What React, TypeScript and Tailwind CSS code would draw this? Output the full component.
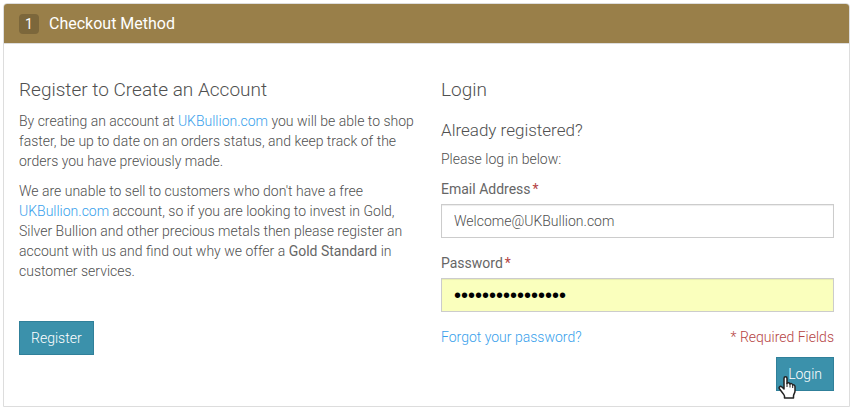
import { useState } from "react";
import type { ReactNode } from "react";

function BrandLink() {
  return (
    <a href="#home" className="text-[#389fec] hover:underline">
      UKBullion.com
    </a>
  );
}

function ActionButton({
  children,
  type = "button",
}: {
  children: ReactNode;
  type?: "button" | "submit";
}) {
  return (
    <button
      type={type}
      className="block h-[34px] px-[11px] text-sm text-white bg-[#3b91ab] border border-[#30809a] cursor-pointer"
    >
      {children}
    </button>
  );
}

function HandPointer() {
  return (
    <svg
      viewBox="0 0 18 24"
      aria-hidden="true"
      className="absolute left-0.5 top-[18px] w-[18px] h-6 pointer-events-none"
    >
      <path
        d="M6 14V3.5C6 1.2 9 1.2 9 3.5V8.5C9.5 7.4 11.6 7.6 12 9C12.7 8.2 14.4 8.5 14.7 9.9C15.7 9.4 17 10.2 17 11.6V16C17 18.2 15.5 19 15.5 21V23H6.5V21C6.5 19.5 3.5 17 1.4 13.7C0.5 12.1 2.2 10.7 3.7 11.8Z"
        fill="#fff"
        stroke="#222"
        strokeWidth="1.5"
        strokeLinejoin="round"
      />
      <path d="M9 8V12M12 9V12.5M14.7 10V13" stroke="#222" fill="none" />
    </svg>
  );
}

function Field({
  id,
  label,
  type,
  value,
  onChange,
  className,
}: {
  id: string;
  label: string;
  type: string;
  value: string;
  onChange: (value: string) => void;
  className: string;
}) {
  return (
    <div className="mb-[15px]">
      <label htmlFor={id} className="block mb-[5px] font-normal text-[#666]">
        {label}
        <span className="ml-0.5 text-[#b54343]">*</span>
      </label>
      <input
        id={id}
        type={type}
        value={value}
        onChange={(e) => onChange(e.target.value)}
        className={`block w-full h-[34px] px-3 border border-[#ccc] shadow-[inset_0_1px_1px_rgba(0,0,0,0.075)] outline-none ${className}`}
      />
    </div>
  );
}

export default function App() {
  const [email, setEmail] = useState("Welcome@UKBullion.com");
  const [password, setPassword] = useState("goldstandard2015");

  return (
    <main className="p-[3px] pb-0 bg-white font-['Roboto',sans-serif] font-light text-sm text-[#505050]">
      <section className="border border-[#ddd] rounded-t">
        <header className="flex items-center gap-2.5 h-10 px-[15px] bg-[#997f49] border-b border-[#ddd] rounded-t-[3px] text-white">
          <span className="flex items-center justify-center size-5 rounded bg-[#7c673b] font-normal">
            1
          </span>
          <h2 className="text-base font-normal">Checkout Method</h2>
        </header>

        <div className="grid grid-cols-2 gap-[29px] px-[15px] pt-[34px] pb-[15px]">
          <div>
            <h3 className="mb-[9px] text-[19px] leading-6">
              Register to Create an Account
            </h3>
            <div className="mb-10 -mr-2.5">
              <p className="mb-2.5">
                By creating an account at <BrandLink /> you will be able to shop
                faster, be up to date on an orders status, and keep track of the
                orders you have previously made.
              </p>
              <p>
                We are unable to sell to customers who don't have a free{" "}
                <BrandLink /> account, so if you are looking to invest in Gold,
                Silver Bullion and other precious metals then please register an
                account with us and find out why we offer a{" "}
                <strong className="font-normal text-[#666]">
                  Gold Standard
                </strong>{" "}
                in customer services.
              </p>
            </div>
            <ActionButton>Register</ActionButton>
          </div>

          <form onSubmit={(e) => e.preventDefault()}>
            <h3 className="mb-4 text-[19px] leading-6">Login</h3>
            <h4 className="mb-[7px] text-[17px] leading-6">
              Already registered?
            </h4>
            <p className="mb-2.5">Please log in below:</p>
            <Field
              id="email"
              label="Email Address"
              type="email"
              value={email}
              onChange={setEmail}
              className="bg-white"
            />
            <Field
              id="password"
              label="Password"
              type="password"
              value={password}
              onChange={setPassword}
              className="bg-[#faffbd] text-black font-['Liberation_Sans',sans-serif] text-xl"
            />
            <div className="flex justify-between mb-2.5">
              <a href="#forgot" className="text-[#389fec] hover:underline">
                Forgot your password?
              </a>
              <p className="text-[#b54343]">* Required Fields</p>
            </div>
            <div className="flex justify-end">
              <div className="relative">
                <ActionButton type="submit">Login</ActionButton>
                <HandPointer />
              </div>
            </div>
          </form>
        </div>
      </section>
    </main>
  );
}
